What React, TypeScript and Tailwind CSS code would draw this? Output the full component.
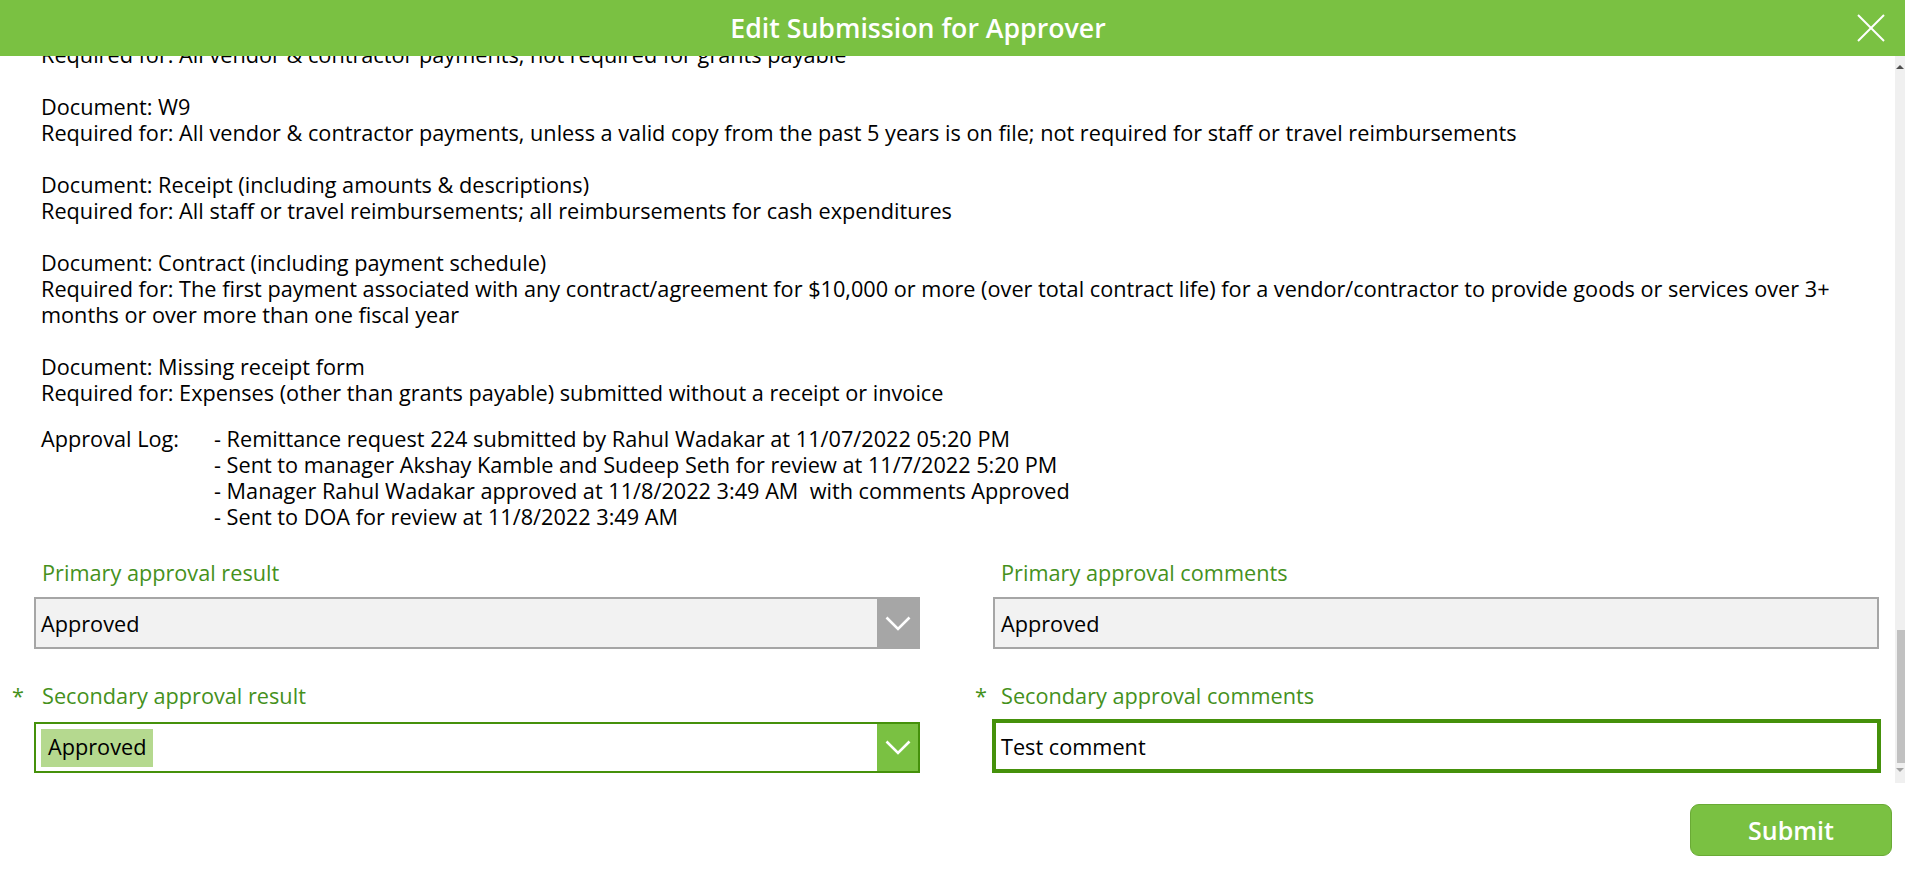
import React from "react";

const docLines = [
  "Required for: All vendor & contractor payments, not required for grants payable",
  "",
  "Document: W9",
  "Required for: All vendor & contractor payments, unless a valid copy from the past 5 years is on file; not required for staff or travel reimbursements",
  "",
  "Document: Receipt (including amounts & descriptions)",
  "Required for: All staff or travel reimbursements; all reimbursements for cash expenditures",
  "",
  "Document: Contract (including payment schedule)",
  "Required for: The first payment associated with any contract/agreement for $10,000 or more (over total contract life) for a vendor/contractor to provide goods or services over 3+",
  "months or over more than one fiscal year",
  "",
  "Document: Missing receipt form",
  "Required for: Expenses (other than grants payable) submitted without a receipt or invoice",
];

const logLines = [
  "- Remittance request 224 submitted by Rahul Wadakar at 11/07/2022 05:20 PM",
  "- Sent to manager Akshay Kamble and Sudeep Seth for review at 11/7/2022 5:20 PM",
  "- Manager Rahul Wadakar approved at 11/8/2022 3:49 AM\u00a0 with comments Approved",
  "- Sent to DOA for review at 11/8/2022 3:49 AM",
];

function Chevron() {
  return (
    <svg width="26" height="15" viewBox="0 0 26 15" fill="none">
      <polyline points="1.5,1.5 13,13 24.5,1.5" stroke="white" strokeWidth="2.6" />
    </svg>
  );
}

export default function App() {
  return (
    <div className="w-[1914px] h-[869px] bg-white overflow-hidden font-['Open_Sans',sans-serif] text-[21.7px] text-black">
      {/* header */}
      <div className="flex w-[1905px] h-[56px] bg-[#7ac142] items-center">
        <div className="flex-1 text-center text-white text-[26.7px] font-semibold">
          Edit Submission for Approver
        </div>
        <div className="w-[69px] flex justify-center">
          <svg width="28" height="28" viewBox="0 0 28 28" fill="none">
            <line x1="1" y1="1" x2="27" y2="27" stroke="white" strokeWidth="2" />
            <line x1="27" y1="1" x2="1" y2="27" stroke="white" strokeWidth="2" />
          </svg>
        </div>
      </div>

      <div className="flex w-[1905px] h-[727px]">
        {/* scrolled content */}
        <div className="flex-1 overflow-hidden">
          <div className="-mt-[14px] pl-[41px] leading-[26px]">
            {docLines.map((line, i) => (
              <div key={i} className="h-[26px] whitespace-pre">
                {line}
              </div>
            ))}
          </div>

          <div className="mt-[20px] pl-[41px] flex leading-[26px]">
            <div className="w-[173px]">Approval Log:</div>
            <div>
              {logLines.map((line, i) => (
                <div key={i} className="whitespace-pre">
                  {line}
                </div>
              ))}
            </div>
          </div>

          <div className="mt-[30px] flex">
            {/* left column */}
            <div className="w-[960px] flex flex-col">
              <div className="pl-[42px] leading-[26px] text-[#45911c]">Primary approval result</div>
              <div className="mt-[11px] ml-[34px] w-[886px] h-[52px] flex border-2 border-[#a6a6a6] bg-[#f2f2f2]">
                <div className="flex-1 flex items-center pl-[5px] pt-[2px]">Approved</div>
                <div className="w-[41px] bg-[#a6a6a6] flex items-center justify-center">
                  <Chevron />
                </div>
              </div>

              <div className="mt-[34px] pl-[12px] flex leading-[26px] text-[#45911c]">
                <span className="w-[30px]">*</span>
                <span>Secondary approval result</span>
              </div>
              <div className="mt-[13px] ml-[34px] w-[886px] h-[51px] flex border-2 border-[#45910b] bg-white">
                <div className="flex-1 flex items-center pl-[5px]">
                  <span className="bg-[#b5d98f] h-[38px] flex items-center px-[7px]">Approved</span>
                </div>
                <div className="w-[41px] bg-[#7ac142] flex items-center justify-center">
                  <Chevron />
                </div>
              </div>
            </div>

            {/* right column */}
            <div className="flex-1 flex flex-col">
              <div className="pl-[41px] leading-[26px] text-[#45911c]">Primary approval comments</div>
              <div className="mt-[11px] ml-[33px] w-[886px] h-[52px] flex items-center pl-[6px] pt-[2px] border-2 border-[#a6a6a6] bg-[#f2f2f2]">
                Approved
              </div>

              <div className="mt-[34px] pl-[15px] flex leading-[26px] text-[#45911c]">
                <span className="w-[26px]">*</span>
                <span>Secondary approval comments</span>
              </div>
              <div className="mt-[10px] ml-[32px] w-[889px] h-[54px] flex items-center pl-[5px] pt-[3px] border-4 border-[#45910b] bg-white">
                Test comment
              </div>
            </div>
          </div>
        </div>

        {/* scrollbar */}
        <div className="w-[10px] bg-[#f0f0f0] flex flex-col items-end">
          <div className="mt-[9px] mr-[1px] w-0 h-0 border-l-[4px] border-r-[4px] border-b-[4px] border-l-transparent border-r-transparent border-b-[#505050]" />
          <div className="mt-[561px] w-[8px] h-[133px] bg-[#c1c1c1]" />
          <div className="mt-[5px] mr-[1px] w-0 h-0 border-l-[4px] border-r-[4px] border-t-[4px] border-l-transparent border-r-transparent border-t-[#a3a3a3]" />
        </div>
      </div>

      <div className="flex justify-end pr-[22px] pt-[21px]">
        <button className="w-[202px] h-[52px] rounded-[9px] bg-[#7ac142] border border-[#6aaa36] text-white text-[25px] font-semibold pt-[1px]">
          Submit
        </button>
      </div>
    </div>
  );
}
